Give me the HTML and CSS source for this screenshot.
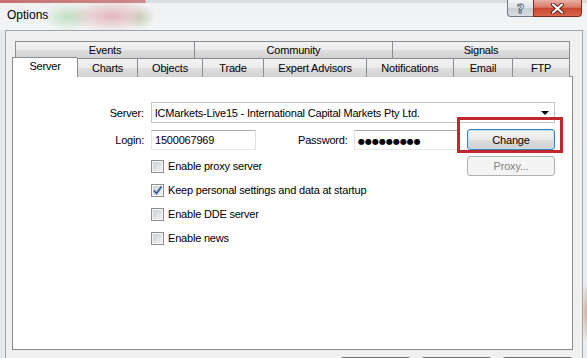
FILE: index.html
```html
<!DOCTYPE html>
<html lang="en">
<head>
    <meta charset="UTF-8">
    <meta name="viewport" content="width=device-width, initial-scale=1.0">
    <title>Options</title>
    <link rel="stylesheet" href="styles.css">
</head>
<body>
    <div class="window">
        <div class="titlebar">
            <span class="title">Options</span>
            <div class="caption">
                <button class="cap-btn help"><span>?</span></button>
                <button class="cap-btn close">
                    <svg width="15" height="11" viewBox="0 0 15 11">
                        <path d="M3 1.5 L12 9.5 M12 1.5 L3 9.5" stroke="#5a1a12" stroke-width="4" stroke-linecap="round"/>
                        <path d="M3 1.5 L12 9.5 M12 1.5 L3 9.5" stroke="#fff" stroke-width="2.2" stroke-linecap="round"/>
                    </svg>
                </button>
            </div>
        </div>

        <div class="client">
            <div class="tabs">
                <div class="tab-row back">
                    <div class="tab">Events</div>
                    <div class="tab">Community</div>
                    <div class="tab">Signals</div>
                </div>
                <div class="tab-row front">
                    <div class="tab active">Server</div>
                    <div class="tab">Charts</div>
                    <div class="tab">Objects</div>
                    <div class="tab">Trade</div>
                    <div class="tab">Expert Advisors</div>
                    <div class="tab">Notifications</div>
                    <div class="tab">Email</div>
                    <div class="tab">FTP</div>
                </div>
            </div>

            <div class="panel">
                <div class="form">
                    <div class="row row-server">
                        <label class="label">Server:</label>
                        <div class="combo">
                            <span>ICMarkets-Live15 - International Capital Markets Pty Ltd.</span>
                            <span class="arrow"></span>
                        </div>
                    </div>

                    <div class="row row-login">
                        <label class="label">Login:</label>
                        <div class="textbox">1500067969</div>
                        <label class="pw-label">Password:</label>
                        <div class="textbox password"><span class="dots">●●●●●●●●●</span></div>
                        <div class="change-wrap">
                            <button class="btn default">Change</button>
                            <div class="annot"></div>
                        </div>
                    </div>

                    <div class="row row-proxy">
                        <div class="check">
                            <span class="cb"></span>
                            <span>Enable proxy server</span>
                        </div>
                        <button class="btn proxy" disabled>Proxy...</button>
                    </div>

                    <div class="row check-row">
                        <div class="check">
                            <span class="cb">
                                <svg width="11" height="11" viewBox="0 0 11 11">
                                    <path d="M2 5.5 L4.5 8.5 L9.5 1.5" fill="none" stroke="#3b5a9c" stroke-width="1.9"/>
                                </svg>
                            </span>
                            <span>Keep personal settings and data at startup</span>
                        </div>
                    </div>

                    <div class="row check-row">
                        <div class="check">
                            <span class="cb"></span>
                            <span>Enable DDE server</span>
                        </div>
                    </div>

                    <div class="row check-row">
                        <div class="check">
                            <span class="cb"></span>
                            <span>Enable news</span>
                        </div>
                    </div>
                </div>
            </div>

            <!-- dialog buttons, only their top edge is in view -->
            <div class="footer">
                <button class="btn foot" aria-label="OK"></button>
                <button class="btn foot" aria-label="Cancel"></button>
                <button class="btn foot" aria-label="Help"></button>
            </div>
        </div>
    </div>
</body>
</html>
```

FILE: styles.css
```css
* {
    margin: 0;
    padding: 0;
    box-sizing: border-box;
}

body {
    font-family: "Liberation Sans", Arial, sans-serif;
    font-size: 11px;
    letter-spacing: -0.2px;
    color: #000;
    background: #e6e9ec;
    height: 358px;
    overflow: hidden;
}

button {
    font-family: inherit;
    font-size: inherit;
    letter-spacing: inherit;
}

.window {
    min-height: 358px;
    background:
        radial-gradient(ellipse 6px 30px at 100% 312px, rgba(200, 110, 80, 0.55), transparent),
        linear-gradient(90deg, #e2e8e4 0, #e9ecef 6px);
}

/* title bar */

.titlebar {
    height: 30px;
    display: flex;
    justify-content: space-between;
    align-items: flex-start;
    padding: 0 5px 0 7px;
    background:
        linear-gradient(90deg, rgba(185, 70, 70, 0.75) 0, rgba(185, 70, 70, 0.6) 145px, rgba(200, 200, 205, 0.5) 146px) 0 0 / 100% 3px no-repeat,
        radial-gradient(ellipse 45px 16px at 112px 16px, rgba(215, 110, 120, 0.45), transparent),
        radial-gradient(ellipse 25px 14px at 68px 17px, rgba(120, 200, 120, 0.4), transparent),
        radial-gradient(ellipse 14px 12px at 140px 18px, rgba(120, 200, 120, 0.35), transparent),
        linear-gradient(#eef0f2, #f3f4f5);
}

.title {
    font-size: 12px;
    letter-spacing: 0;
    line-height: 30px;
    color: #000;
}

.caption {
    display: flex;
}

.cap-btn {
    height: 17px;
    border: 1px solid #6f7a87;
    border-top: none;
    display: flex;
    align-items: center;
    justify-content: center;
}

.help {
    width: 26px;
    border-right: none;
    border-bottom-left-radius: 4px;
    background: linear-gradient(#f1f3f5 0%, #dfe3e7 50%, #c9ced4 51%, #d9dde1 100%);
    color: #fff;
    font-size: 13px;
    font-weight: bold;
    font-family: "DejaVu Sans", sans-serif;
}

.help span {
    line-height: 15px;
    -webkit-text-stroke: 0.8px #4a5565;
}

.close {
    width: 49px;
    border-color: #7a2b22;
    border-bottom-right-radius: 4px;
    background: linear-gradient(#eab1a6 0%, #d97a68 45%, #c6482f 52%, #d9654c 100%);
}

/* client area */

.client {
    margin: 0 4px 0 5px;
    border: 1px solid #9ca4ad;
    border-bottom: none;
    background: #f0f0f0;
    padding: 10px 9px 0 6px;
    height: 328px;
}

.tab-row {
    display: grid;
}

.tab-row.back {
    grid-template-columns: 179px 198px 178px;
    margin-left: 3px;
    height: 17px;
}

.tab-row.front {
    grid-template-columns: 65px 60px 65px 61px 103px 87px 59px 58px;
    height: 19px;
    margin-top: -1px;
    align-items: end;
}

.tab {
    border: 1px solid #898c95;
    border-bottom: none;
    border-right: none;
    background: linear-gradient(#f3f3f3 0%, #ebebeb 50%, #dedede 51%, #d2d2d2 100%);
    text-align: center;
    white-space: nowrap;
}

.tab:last-child {
    border-right: 1px solid #898c95;
}

.back .tab {
    height: 17px;
    line-height: 16px;
}

.front .tab {
    height: 19px;
    line-height: 19px;
}

.front .tab.active {
    height: 21px;
    line-height: 17px;
    margin-bottom: -1px;
    background: #fff;
    position: relative;
    z-index: 1;
}

.panel {
    height: 274px;
    border: 1px solid #898c95;
    background: #fff;
}

.form {
    padding: 25px 17px 0 0;
}

.row {
    display: flex;
    align-items: center;
}

.label {
    width: 138px;
    padding-right: 7px;
    text-align: right;
}

.row-server {
    height: 21px;
}

.combo {
    width: 405px;
    height: 21px;
    border: 1px solid #c5c5c5;
    display: flex;
    align-items: center;
    padding-left: 3px;
}

.arrow {
    margin-left: auto;
    margin-right: 5px;
    border-left: 4px solid transparent;
    border-right: 4px solid transparent;
    border-top: 4px solid #000;
}

.row-login {
    height: 21px;
    margin-top: 6px;
}

.textbox {
    width: 105px;
    height: 20px;
    border: 1px solid;
    border-color: #abadb3 #dbdfe6 #e3e9ef #e2e3ea;
    padding-left: 3px;
    line-height: 18px;
}

.pw-label {
    width: 56px;
    margin-left: 42px;
}

.dots {
    font-family: "DejaVu Sans", sans-serif;
    font-size: 8px;
    letter-spacing: 0;
}

.change-wrap {
    position: relative;
    margin-left: auto;
}

.annot {
    position: absolute;
    left: -10px;
    top: -12px;
    width: 106px;
    height: 36px;
    border: 3px solid #c1272e;
    pointer-events: none;
}

.btn {
    width: 88px;
    height: 21px;
    border: 1px solid #707070;
    border-radius: 3px;
    background: linear-gradient(#f2f2f2 0%, #ebebeb 50%, #dddddd 51%, #cfcfcf 100%);
    color: #000;
}

.btn.default {
    border-color: #3c7fb1;
    box-shadow: inset 0 0 0 1px #bfe6f8;
}

.btn:disabled {
    border-color: #adb2b5;
    background: #f4f4f4;
    color: #838383;
}

.row-proxy {
    height: 20px;
    margin-top: 6px;
}

.row-proxy .btn {
    height: 20px;
    margin-left: auto;
}

.check {
    display: flex;
    align-items: center;
    gap: 4px;
    padding-left: 138px;
}

.cb {
    width: 13px;
    height: 13px;
    border: 1px solid #8e8f8f;
    background: linear-gradient(135deg, #c9cdd2 0%, #e3e5e8 60%, #f4f4f4 100%);
    box-shadow: inset 0 0 0 1px #f5f5f5;
    display: flex;
    align-items: center;
    justify-content: center;
}

.check-row {
    height: 24px;
}

.row-proxy + .check-row {
    margin-top: 2px;
}

.footer {
    display: flex;
    justify-content: flex-end;
    gap: 10px;
    margin-top: 7px;
}

.btn.foot {
    width: 71px;
    height: 23px;
}
```
